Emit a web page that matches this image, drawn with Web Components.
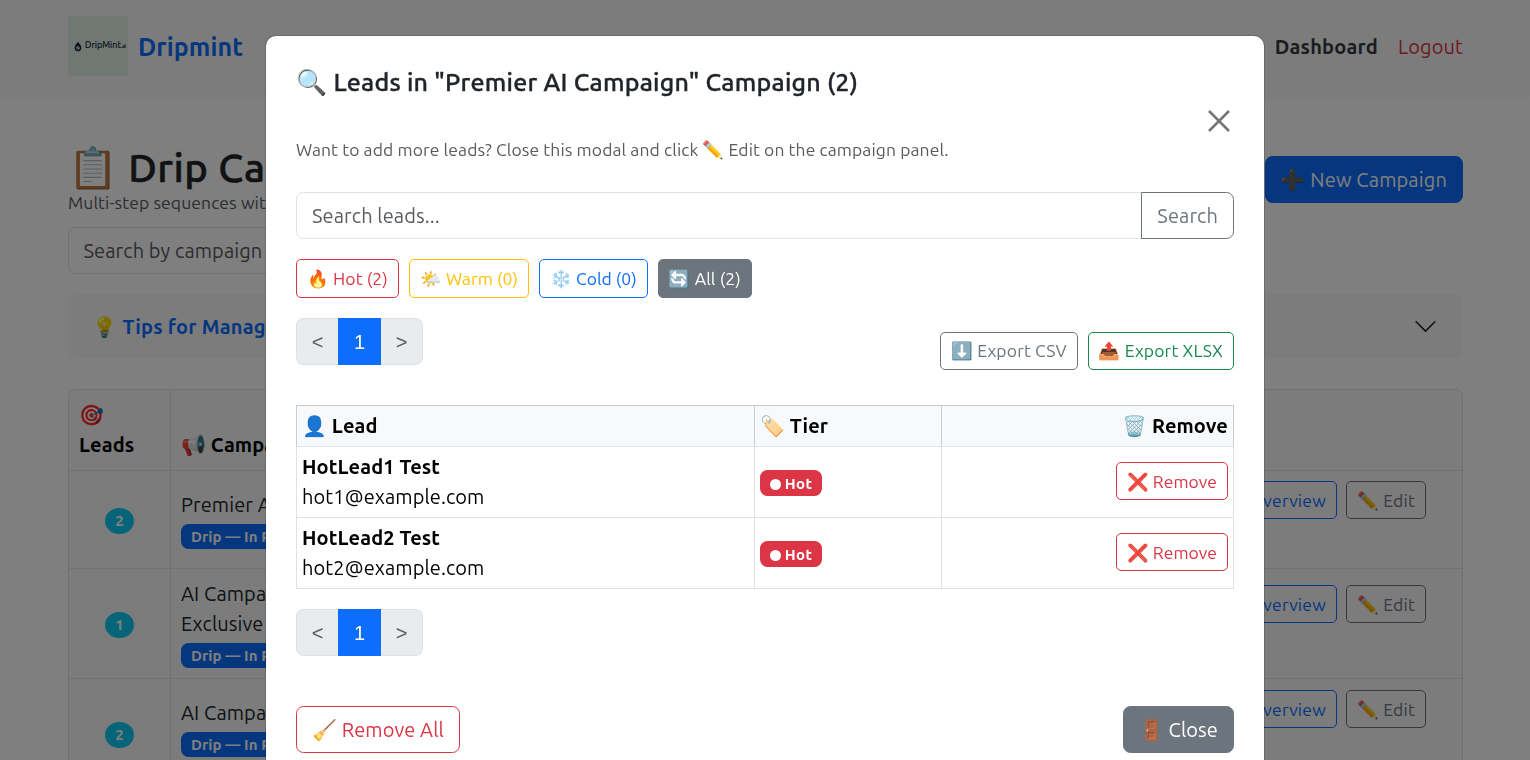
<!DOCTYPE html>
<html lang="en"><head><meta charset="utf-8"><title>Dripmint</title>
<style>
html,body{margin:0;padding:0;height:760px;overflow:hidden}
body{font:20px/1.5 Ubuntu,"Open Sans","Noto Sans","Noto Color Emoji",sans-serif;letter-spacing:.1px;color:#212529;background:#fff}
</style></head><body>
<app-nav></app-nav>
<campaign-page></campaign-page>
<modal-backdrop></modal-backdrop>
<leads-modal></leads-modal>
<script>
function def(name,html){customElements.define(name,class extends HTMLElement{connectedCallback(){if(this.shadowRoot)return;const r=this.attachShadow({mode:'open'});const a=n=>this.getAttribute(n);r.innerHTML=typeof html==='function'?html(a):html;}});}
const X='<span style="font-family:\'Noto Color Emoji\';letter-spacing:0">❌</span>';
def('ui-btn',a=>{
 const s=a('size')==='sm';const c=a('color')||'#6c757d';const solid=a('solid')!==null;
 return `<style>:host{display:inline-block}
 .b{box-sizing:border-box;display:block;border:1px solid ${c};border-radius:${s?5:7.5}px;padding:${s?'5.6px 10px 4.4px':'7.5px 15px'};font-size:${s?17.5:20}px;line-height:1.5;white-space:nowrap;color:${solid?'#fff':c};background:${solid?c:'transparent'}}</style><span class="b"><slot></slot></span>`;
});
def('page-nums',`<style>:host{display:inline-flex;font:20px/30px "Liberation Sans",sans-serif;letter-spacing:0;height:47px}
 span{box-sizing:border-box;display:block;text-align:center;width:43px;border:1px solid #dee2e6;background:#e9ecef;color:#595c5f;padding:7.5px 0;}
 span:first-of-type{width:42px;border-right:0;border-radius:7.5px 0 0 7.5px}span:last-of-type{width:42px;border-left:0;border-radius:0 7.5px 7.5px 0}
 span.on{background:#0d6efd;border-color:#0d6efd;color:#fff}</style><span>&lt;</span><span class="on">1</span><span>&gt;</span>`);
def('tier-badge',`<style>:host{display:inline-block;background:#dc3545;color:#fff;font-size:15px;font-weight:700;line-height:15px;padding:5.25px 9.75px;border-radius:7.5px;white-space:nowrap;margin-top:2px;letter-spacing:.4px}
 i{display:inline-block;width:11px;height:11px;border-radius:50%;background:#fff;vertical-align:-1.5px;margin-right:4px}</style><i></i><slot></slot>`);
def('app-nav',`<style>:host{display:flex;box-sizing:border-box;height:94px;padding:16px 67px 0 68px;align-items:flex-start;background:#f8f9fa;box-shadow:0 2px 5px rgba(0,0,0,.06);position:relative}
 .logo{width:60px;height:60px;background:#e3f1e8;display:flex;align-items:center;justify-content:center;gap:3px;font-size:9px;letter-spacing:0;font-weight:400;-webkit-text-stroke:.2px #0c2536;color:#0c2536;margin-right:10px;padding-left:4px;box-sizing:border-box}
 .brand{color:#0d6efd;font-size:25px;font-weight:700;flex:1;line-height:62px}
 a{font-size:20px;margin-left:20px;line-height:62px}.d{font-weight:700;color:#343a40;letter-spacing:.2px}.l{color:#dc3545}</style>
 <div class="logo"><svg width="8" height="11" viewBox="0 0 10 13"><path d="M5 .5C3.500 3 .8 5 .8 8.2a4.200 4.200 0 0 0 8.400 0C9.200 5 6.500 3 5 .5z" fill="#0c2536"/><path d="M5 10.500c-1.500 0-2.300-1-2.300-2.300 0-1 .9-2 2.300-2.400 1.300 1 2.300 1.500 2.300 2.400 0 1.300-1 2.300-2.300 2.300z" fill="#e3f1e8"/><path d="M3.700 9.600 6 6.800" stroke="#0c2536" stroke-width=".8"/></svg><span>DripMint<small style="font-size:5px">.ai</small></span></div>
 <div class="brand">Dripmint</div><a class="d">Dashboard</a><a class="l">Logout</a>`);
def('campaign-row',a=>`<style>:host{display:grid;grid-template-columns:102px 1fr;box-sizing:border-box;background:#f8f9fa;border-top:1px solid #dee2e6;height:${a('h')}px}
 .c{display:flex;align-items:center;justify-content:center;border-right:1px solid #dee2e6}
 .n{background:#0dcaf0;color:#fff;font-size:15px;font-weight:700;padding:3px 10px;border-radius:50%;line-height:20px;margin-top:2px}
 .m{padding:${a('pt')}px 10px 0;grid-column:2;grid-row:1}
 .t{display:block;line-height:30px}
 .p{display:inline-block;background:#0d6efd;color:#fff;font-size:15px;font-weight:700;line-height:15px;padding:5px 10px;border-radius:7.5px;margin-top:3px}
 .r{display:flex;gap:9px;justify-content:flex-end;padding:${a('bt')}px 36px 0 0;grid-column:2;grid-row:1;align-items:flex-start;letter-spacing:.2px}</style>
 <div class="c"><span class="n">${a('n')}</span></div>
 <div class="m"><span class="t">${a('t')}</span><span class="p">Drip — In Progress</span></div>
 <div class="r"><ui-btn size="sm" color="#0d6efd">📊 Overview</ui-btn><ui-btn size="sm" color="#6c757d">✏️ Edit</ui-btn></div>`);
def('campaign-page',`<style>:host{display:block;padding:50px 67px 0 68px}
 .head{display:flex;justify-content:space-between;align-items:flex-start;height:83px}
 h1{margin:0;font-size:40px;font-weight:500;line-height:48px;color:#212529;letter-spacing:.5px;white-space:nowrap}
 h1 span{-webkit-text-stroke:.55px #212529}
 p{margin:2px 0 0;font-size:17.5px;line-height:18px;color:#595c5f;white-space:nowrap}
 ui-btn{margin-top:12px;letter-spacing:.14px}
 .s{box-sizing:border-box;height:47px;border:1px solid #dee2e6;border-radius:7.5px;padding:7.5px 14.5px;color:#595c5f;width:600px}
 .tips{margin-top:20px;box-sizing:border-box;height:64px;padding:1px 25px 0 24.5px;background:#f8f9fa;border-radius:7.5px;display:flex;align-items:center;justify-content:space-between;font-weight:700;color:#0d6efd;letter-spacing:.2px}
 .tips svg{margin-top:-1px}
 .tb{margin-top:31px;border:1px solid #dee2e6;border-bottom:0;border-radius:7.5px 7.5px 0 0;overflow:hidden}
 .th{display:grid;grid-template-columns:102px 1fr;height:80px;background:#f8f9fa;color:#000;font-weight:700}
 .th div{padding:10px;border-right:1px solid #dee2e6}.th div:last-child{border:0;align-self:end;padding-bottom:10px}</style>
 <div class="head"><div><h1>📋 <span>Drip Campaigns</span></h1><p>Multi-step sequences with AI-powered follow-ups.</p></div><ui-btn color="#0d6efd" solid>➕ New Campaign</ui-btn></div>
 <div class="s">Search by campaign name</div>
 <div class="tips"><span>💡 Tips for Managing Drip Campaigns</span><svg width="25" height="25" viewBox="0 0 16 16"><path fill="#212529" fill-rule="evenodd" d="M1.646 4.646a.5.5 0 0 1 .708 0L8 10.293l5.646-5.647a.5.5 0 0 1 .708.708l-6 6a.5.5 0 0 1-.708 0l-6-6a.5.5 0 0 1 0-.708z"/></svg></div>
 <div class="tb"><div class="th"><div>🎯<br>Leads</div><div>📢 Campaign</div></div>
 <campaign-row h="98" n="2" pt="19" bt="10" t="Premier AI Campaign"></campaign-row>
 <campaign-row h="110" n="1" pt="10" bt="16" t="AI Campaign Exclusive<br>Exclusive Offer"></campaign-row>
 <campaign-row h="110" n="2" pt="19" bt="11" t="AI Campaign"></campaign-row></div>`);
def('modal-backdrop',`<style>:host{display:block;position:fixed;inset:0;background:rgba(0,0,0,.5)}</style>`);
def('lead-row',a=>`<style>:host{display:grid;grid-template-columns:458px 187px 1fr;height:71px;box-sizing:border-box;border-top:1px solid #dee2e6;color:#000}
 div{padding:5px;border-left:1px solid #dee2e6;box-sizing:border-box}div:last-child{border-right:1px solid #dee2e6}
 .mid{display:flex;align-items:center}.end{display:flex;align-items:center;justify-content:flex-end}
 .end ui-btn{margin-bottom:1.5px;letter-spacing:.03px}
 b{display:block}</style>
 <div><b>${a('name')}</b>${a('mail')}</div><div class="mid"><tier-badge>Hot</tier-badge></div><div class="end"><ui-btn size="sm" color="#dc3545">${X} Remove</ui-btn></div>`);
def('leads-modal',`<style>:host{position:fixed;top:36px;left:266px;width:998px;box-sizing:border-box;background:#fff;border-radius:10px;padding:30px;display:block;height:760px;box-shadow:0 0 0 1px rgba(0,0,0,.15)}
 .hd{display:flex;justify-content:space-between}
 h5{margin:0;font-size:25px;font-weight:500;line-height:30px;color:#212529;letter-spacing:.21px;margin-top:1px;margin-bottom:-1px}
 h5 span{-webkit-text-stroke:.35px #212529}
 p{margin:41px 0 0;font-size:17.5px;line-height:26px;color:#595c5f}
 .x{width:30px;height:30px;margin-top:40px;display:flex;align-items:center;justify-content:center}
 .search{display:flex;margin-top:29px}
 .in{flex:1;box-sizing:border-box;height:47px;border:1px solid #dee2e6;border-radius:7.5px 0 0 7.5px;padding:7.5px 15px;color:#595c5f}
 .go{box-sizing:border-box;height:47px;margin-left:-1px;border:1px solid #6c757d;border-radius:0 7.5px 7.5px 0;padding:7.5px 15px;color:#6c757d}
 .fl{display:flex;gap:10px;margin-top:20.4px;height:38.65px}
 .tools{display:flex;justify-content:space-between;align-items:flex-end;margin-top:20px}
 .tools page-nums{margin-bottom:5px}.ex{display:flex;gap:10px;letter-spacing:.14px}
 .tbl{margin-top:35px;border-bottom:1px solid #dee2e6}
 .th{display:grid;grid-template-columns:458px 187px 1fr;height:41px;box-sizing:border-box;background:#f8f9fa;border-top:1px solid #c9ccd0;color:#000;font-weight:700}
 .th div{padding:5px;box-sizing:border-box;border-left:1px solid #c9ccd0;line-height:30px}.th div:last-child{border-right:1px solid #c9ccd0;text-align:right}
 .pg{margin-top:20px}
 .ft{display:flex;justify-content:space-between;margin-top:50px}</style>
 <div class="hd"><div><h5>🔍 <span>Leads in "Premier AI Campaign" Campaign (2)</span></h5><p>Want to add more leads? Close this modal and click ✏️ Edit on the campaign panel.</p></div>
 <div class="x"><svg width="22" height="22" viewBox="0 0 22 22"><path d="M1 1l20 20M21 1L1 21" stroke="#757575" stroke-width="2.500" fill="none"/></svg></div></div>
 <div class="search"><div class="in">Search leads...</div><div class="go">Search</div></div>
 <div class="fl"><ui-btn size="sm" color="#dc3545">🔥 Hot (2)</ui-btn><ui-btn size="sm" color="#ffc107">🌤️ Warm (0)</ui-btn><ui-btn size="sm" color="#0d6efd" style="letter-spacing:0">❄️ Cold (0)</ui-btn><ui-btn size="sm" color="#6c757d" solid>🔄 All (2)</ui-btn></div>
 <div class="tools"><page-nums></page-nums><div class="ex"><ui-btn size="sm" color="#6c757d">⬇️ Export CSV</ui-btn><ui-btn size="sm" color="#198754">📤 Export XLSX</ui-btn></div></div>
 <div class="tbl"><div class="th"><div>👤 Lead</div><div>🏷️ Tier</div><div>🗑️ Remove</div></div>
 <lead-row name="HotLead1 Test" mail="hot1@example.com"></lead-row><lead-row name="HotLead2 Test" mail="hot2@example.com"></lead-row></div>
 <div class="pg"><page-nums></page-nums></div>
 <div class="ft"><ui-btn color="#dc3545">🧹 Remove All</ui-btn><ui-btn color="#6c757d" solid>🚪 Close</ui-btn></div>`);
</script></body></html>
